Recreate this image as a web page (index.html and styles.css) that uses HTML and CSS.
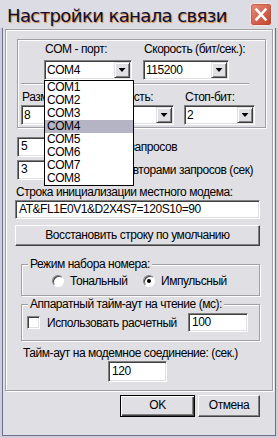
FILE: index.html
```html
<!DOCTYPE html>
<html lang="ru">
<head>
    <meta charset="UTF-8">
    <title>Настройки канала связи</title>
    <link rel="stylesheet" href="styles.css">
</head>
<body>
<div class="window">
    <div class="titlebar">
        <span class="title">Настройки канала связи</span>
        <span class="close">
            <svg width="22" height="23" viewBox="0 0 22 23">
                <defs>
                    <linearGradient id="cg" x1="0" y1="0" x2="1" y2="1">
                        <stop offset="0" stop-color="#ea8f7e"/>
                        <stop offset="1" stop-color="#c23d28"/>
                    </linearGradient>
                </defs>
                <rect x="0.5" y="0.5" width="21" height="22" rx="3" fill="url(#cg)" stroke="#f4e8e8"/>
                <rect x="1.5" y="1.5" width="19" height="20" rx="2" fill="none" stroke="#b5432f" stroke-opacity="0.5"/>
                <path d="M6.5 6.5l9 10M15.5 6.5l-9 10" stroke="#fff" stroke-width="2.6" stroke-linecap="square"/>
            </svg>
        </span>
    </div>

    <div class="frame">
        <div class="panel etched">
            <div class="com-group etched">
                <div class="row-top">
                    <div>
                        <div class="lbl">COM - порт:</div>
                        <div class="combo"><span class="val">COM4</span><span class="arrow"></span></div>
                    </div>
                    <div>
                        <div class="lbl">Скорость (бит/сек.):</div>
                        <div class="combo"><span class="val">115200</span><span class="arrow"></span></div>
                    </div>
                </div>
                <div class="sep"></div>
                <div class="row-bot">
                    <div>
                        <div class="lbl">Размер байта:</div>
                        <div class="combo"><span class="val">8</span><span class="arrow"></span></div>
                    </div>
                    <div>
                        <div class="lbl">Четность:</div>
                        <div class="combo"><span class="val">Нет</span><span class="arrow"></span></div>
                    </div>
                    <div>
                        <div class="lbl">Стоп-бит:</div>
                        <div class="combo"><span class="val">2</span><span class="arrow"></span></div>
                    </div>
                </div>
            </div>

            <div class="field-row first">
                <div class="edit small">5</div>
                <span>Число повторов запросов</span>
            </div>
            <div class="field-row">
                <div class="edit small">3</div>
                <span>Пауза между повторами запросов (сек)</span>
            </div>

            <div class="lbl init-label">Строка инициализации местного модема:</div>
            <div class="edit init-edit">AT&amp;FL1E0V1&amp;D2X4S7=120S10=90</div>
            <div class="btn restore">Восстановить строку по умолчанию</div>

            <fieldset class="group dial">
                <legend>Режим набора номера:</legend>
                <div class="radio-row">
                    <span class="opt"><span class="radio"></span>Тональный</span>
                    <span class="opt"><span class="radio checked"></span>Импульсный</span>
                </div>
            </fieldset>

            <fieldset class="group hw">
                <legend>Аппаратный тайм-аут на чтение (мс):</legend>
                <div class="chk-row">
                    <span class="check"></span>
                    <span class="chk-text">Использовать расчетный</span>
                    <div class="edit hw-edit">100</div>
                </div>
            </fieldset>

            <div class="lbl conn-label">Тайм-аут на модемное соединение: (сек.)</div>
            <div class="edit conn-edit">120</div>
        </div>

        <div class="buttons">
            <div class="btn default ok">OK</div>
            <div class="btn cancel">Отмена</div>
        </div>
    </div>

    <div class="dropdown">
        <div class="item">COM1</div>
        <div class="item">COM2</div>
        <div class="item">COM3</div>
        <div class="item sel">COM4</div>
        <div class="item">COM5</div>
        <div class="item">COM6</div>
        <div class="item">COM7</div>
        <div class="item">COM8</div>
    </div>
</div>
</body>
</html>
```

FILE: styles.css
```css
body { margin: 0; background: #e0dfe3; font-family: "Liberation Sans", Arial, sans-serif; font-size: 12px; letter-spacing: -0.45px; color: #000; }
.window { position: relative; width: 278px; height: 438px; background: #cfcfdb; }

.titlebar { height: 28px; display: flex; justify-content: space-between; padding: 0 6px 0 7px; box-sizing: border-box; background: #dcdce4; }
.title { font-family: "DejaVu Sans", sans-serif; font-size: 18px; letter-spacing: -0.6px; line-height: 24px; padding-top: 4px; color: #0d0f3a; text-shadow: 1px 1px 1px #d58b3c; white-space: nowrap; }
.close { width: 22px; height: 23px; margin-top: 3px; }
.close svg { display: block; }

.frame { height: 408px; margin: 0 2px; box-sizing: border-box; border: 1px solid #6e6d8d; border-top: 0; background: #e0dfe3; padding-top: 1px; }
.etched { border: 1px solid #a09fa8; box-shadow: inset 1px 1px #fff, 1px 1px #fff; box-sizing: border-box; }
.panel { margin-left: 2px; width: 268px; height: 362px; }

.com-group { margin: 9px 0 0 11px; width: 249px; height: 89px; }
.row-top { display: grid; grid-template-columns: 88px 86px; column-gap: 11px; margin: 2px 0 0 26px; }
.row-bot { display: grid; grid-template-columns: 71px 72px 71px; column-gap: 10px; margin: 6px 0 0 3px; }
.lbl { line-height: 14px; height: 14px; white-space: nowrap; padding-left: 1px; }
.row-top .combo { margin-top: 4px; }
.row-bot .combo { margin-top: 1px; }
.sep { margin: 3px 0 0 3px; width: 228px; height: 1px; background: #a09fa8; box-shadow: 0 1px #fff; }

.combo, .edit { height: 20px; box-sizing: border-box; background: #fff; border: 1px solid; border-color: #808080 #fff #fff #808080; box-shadow: inset 1px 1px #404040, inset -1px -1px #e0dfe3; }
.combo { display: flex; padding: 1px; }
.combo .val { flex: 1; line-height: 16px; padding-left: 1px; white-space: nowrap; overflow: hidden; }
.arrow { width: 16px; height: 16px; box-sizing: border-box; background: #e0dfe3; border: 1px solid; border-color: #e0dfe3 #404040 #404040 #e0dfe3; box-shadow: inset 1px 1px #fff, inset -1px -1px #808080; display: flex; align-items: center; justify-content: center; }
.arrow::after { content: ""; width: 7px; height: 4px; background: #000; clip-path: polygon(0 0, 100% 0, 50% 100%); }
.edit { padding: 0 3px; line-height: 17px; white-space: nowrap; }

.field-row { display: flex; align-items: center; gap: 3px; margin: 3px 0 0 11px; white-space: nowrap; }
.field-row.first { margin-top: 9px; gap: 0; }
.field-row.first span { margin-left: -3px; }
.edit.small { width: 30px; }

.init-label { margin: 5px 0 0 9px; }
.init-edit { margin: 1px 0 0 9px; width: 245px; height: 19px; line-height: 16px; }

.btn { box-sizing: border-box; background: #e0dfe3; border: 1px solid; border-color: #fff #404040 #404040 #fff; box-shadow: inset -1px -1px #808080, inset 1px 1px #e0dfe3; text-align: center; white-space: nowrap; }
.restore { margin: 6px 0 0 9px; width: 245px; height: 21px; line-height: 18px; }

.group { margin: 0 0 0 15px; padding: 0; width: 239px; box-sizing: border-box; border: 1px solid #a09fa8; box-shadow: inset 1px 1px #fff, 1px 1px #fff; min-width: 0; }
.group legend { padding: 0 2px; margin-left: 6px; line-height: 14px; background: #e0dfe3; }
.dial { margin-top: 11px; height: 39px; }
.hw { margin-top: 1px; height: 44px; }

.radio-row { display: flex; align-items: center; height: 14px; margin: 3px 0 0 30px; }
.opt { display: flex; align-items: center; gap: 6px; }
.opt:first-child { width: 91px; }
.radio { position: relative; width: 12px; height: 12px; box-sizing: border-box; border-radius: 50%; background: #fff; border: 1px solid; border-color: #808080 #fff #fff #808080; box-shadow: inset 1px 1px #404040; }
.radio.checked::after { content: ""; position: absolute; left: 3px; top: 3px; width: 4px; height: 4px; border-radius: 50%; background: #000; }

.chk-row { display: flex; align-items: center; height: 19px; margin: 2px 0 0 5px; }
.check { width: 13px; height: 13px; box-sizing: border-box; background: #fff; border: 1px solid; border-color: #808080 #fff #fff #808080; box-shadow: inset 1px 1px #404040, inset -1px -1px #e0dfe3; }
.chk-text { margin-left: 7px; white-space: nowrap; }
.hw-edit { margin: 0 11px 0 auto; width: 60px; height: 19px; line-height: 16px; }

.conn-label { margin: 5px 0 0 16px; }
.conn-edit { margin: 1px 0 0 102px; width: 59px; height: 21px; line-height: 18px; }

.buttons { display: flex; gap: 3px; margin: 4px 0 0 117px; }
.buttons .btn { height: 22px; line-height: 19px; }
.ok { width: 75px; }
.cancel { width: 62px; }
.btn.default { border-color: #000; box-shadow: inset 1px 1px #fff, inset -1px -1px #404040, inset -2px -2px #808080; }

.dropdown { position: absolute; left: 44px; top: 80px; width: 90px; box-sizing: border-box; border: 1px solid #000; background: #fff; }
.item { height: 13px; line-height: 13px; padding-left: 2px; }
.item.sel { background: #b5b4c4; }
```
